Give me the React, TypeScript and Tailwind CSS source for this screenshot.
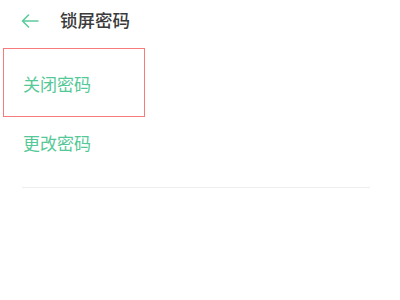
export default function App() {
  return (
    <div
      className="h-[300px] w-[400px] overflow-hidden bg-white"
      style={{ fontFamily: '"Noto Sans CJK SC", "Noto Sans", sans-serif' }}
    >
      {/* header */}
      <div className="flex h-[40px] items-center pl-[21px]">
        <svg width="18" height="14" viewBox="0 0 18 14" fill="none" className="mt-[1px]">
          <path d="M17 7H1.5M7.5 1L1.5 7l6 6" stroke="#5ccb9d" strokeWidth="1.6" strokeLinecap="round" strokeLinejoin="round" />
        </svg>
        <span className="ml-[21px] text-[17.5px] font-medium leading-none text-[#3a3a3a]">锁屏密码</span>
      </div>

      {/* items */}
      <div className="ml-[3px] mt-[8px] flex h-[69px] w-[142px] items-center border-[1.5px] border-[#f77b7b] pl-[19px]">
        <span className="pt-[1px] text-[17px] leading-none text-[#55c897]">关闭密码</span>
      </div>
      <div className="flex h-[52px] items-center pl-[23px]">
        <span className="mt-[-2px] text-[17px] leading-none text-[#55c897]">更改密码</span>
      </div>

      <div className="ml-[22px] mt-[18px] h-px w-[348px] bg-[#eeeeee]" />
    </div>
  );
}
